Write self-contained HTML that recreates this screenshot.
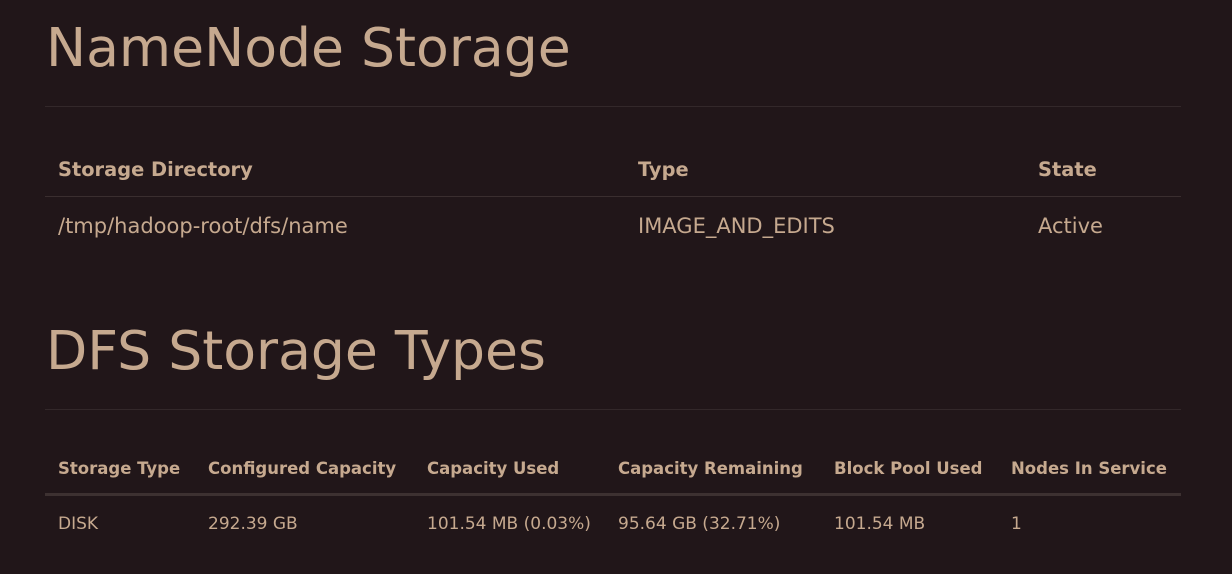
<!DOCTYPE html>
<html><head><meta charset="utf-8"><style>
html,body{margin:0;padding:0;background:#211619;width:1232px;height:574px;overflow:hidden}
body{font-family:"DejaVu Sans","Liberation Sans",sans-serif;color:#c6a98f;position:relative}
.a{position:absolute;white-space:nowrap;line-height:1}
h1{position:absolute;margin:0;font-weight:normal;font-size:53.6px;line-height:1;left:46px;white-space:nowrap}
.hr{position:absolute;left:45px;width:1136px;height:1px;background:#33282a}
.b{font-weight:bold}
</style></head><body>
<h1 style="top:21px">NameNode Storage</h1>
<div class="hr" style="top:106px"></div>
<div class="a b" style="left:58px;top:160px;font-size:19.4px">Storage Directory</div>
<div class="a b" style="left:638px;top:160px;font-size:19.4px">Type</div>
<div class="a b" style="left:1038px;top:160px;font-size:19.4px">State</div>
<div class="hr" style="top:196px;background:#3a2e2f"></div>
<div class="a" style="left:58px;top:216px;font-size:21px">/tmp/hadoop-root/dfs/name</div>
<div class="a" style="left:638px;top:216px;font-size:21px">IMAGE_AND_EDITS</div>
<div class="a" style="left:1038px;top:216px;font-size:21px">Active</div>

<h1 style="top:324px">DFS Storage Types</h1>
<div class="hr" style="top:409px"></div>
<div class="a b" style="left:58px;top:461px;font-size:16.5px">Storage Type</div>
<div class="a b" style="left:208px;top:461px;font-size:16.5px">Configured Capacity</div>
<div class="a b" style="left:427px;top:461px;font-size:16.5px">Capacity Used</div>
<div class="a b" style="left:618px;top:461px;font-size:16.5px">Capacity Remaining</div>
<div class="a b" style="left:834px;top:461px;font-size:16.5px">Block Pool Used</div>
<div class="a b" style="left:1011px;top:461px;font-size:16.5px">Nodes In Service</div>
<div class="hr" style="top:493px;height:3px;background:#3d3131"></div>
<div class="a" style="left:58px;top:516px;font-size:17px">DISK</div>
<div class="a" style="left:208px;top:516px;font-size:17px">292.39 GB</div>
<div class="a" style="left:427px;top:516px;font-size:17px">101.54 MB (0.03%)</div>
<div class="a" style="left:618px;top:516px;font-size:17px">95.64 GB (32.71%)</div>
<div class="a" style="left:834px;top:516px;font-size:17px">101.54 MB</div>
<div class="a" style="left:1011px;top:516px;font-size:17px">1</div>
</body></html>
